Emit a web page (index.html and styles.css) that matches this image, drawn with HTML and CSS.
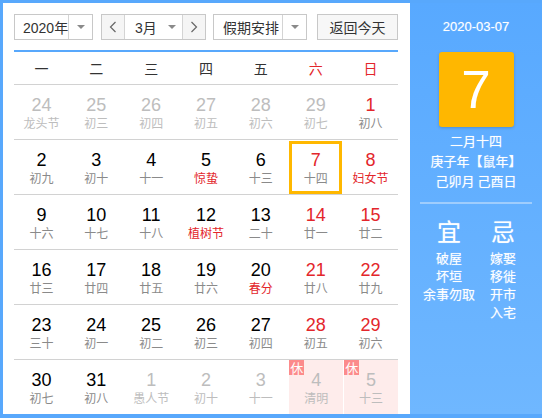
FILE: index.html
```html
<!DOCTYPE html>
<html lang="zh-CN">
<head>
<meta charset="utf-8">
<title>万年历</title>
<link rel="stylesheet" href="styles.css">
</head>
<body>
<div class="cal">
  <div class="main">
    <div class="toolbar">
      <div class="sel sel-year"><span class="sel-text">2020年</span><span class="sel-arrow"><i class="tri"></i></span></div>
      <div class="sel sel-month">
        <span class="nav"><svg width="8" height="12" viewBox="0 0 8 12"><polyline points="6.5,1 1.5,6 6.5,11" fill="none" stroke="#666" stroke-width="1.2"/></svg></span>
        <span class="month-mid"><span class="month-text">3月</span><i class="tri"></i></span>
        <span class="nav nav-r"><svg width="8" height="12" viewBox="0 0 8 12"><polyline points="1.5,1 6.5,6 1.5,11" fill="none" stroke="#666" stroke-width="1.2"/></svg></span>
      </div>
      <div class="sel sel-holiday"><span class="sel-text">假期安排</span><span class="sel-arrow"><i class="tri"></i></span></div>
      <div class="btn-today">返回今天</div>
    </div>
    <div class="rule"></div>
    <div class="week">
      <span>一</span><span>二</span><span>三</span><span>四</span><span>五</span><span class="red">六</span><span class="red">日</span>
    </div>
    <div class="days">
      <div class="row">
        <div class="cell other"><b>24</b><em>龙头节</em></div>
        <div class="cell other"><b>25</b><em>初三</em></div>
        <div class="cell other"><b>26</b><em>初四</em></div>
        <div class="cell other"><b>27</b><em>初五</em></div>
        <div class="cell other"><b>28</b><em>初六</em></div>
        <div class="cell other"><b>29</b><em>初七</em></div>
        <div class="cell wkd"><b>1</b><em>初八</em></div>
      </div>
      <div class="row">
        <div class="cell"><b>2</b><em>初九</em></div>
        <div class="cell"><b>3</b><em>初十</em></div>
        <div class="cell"><b>4</b><em>十一</em></div>
        <div class="cell"><b>5</b><em class="fest">惊蛰</em></div>
        <div class="cell"><b>6</b><em>十三</em></div>
        <div class="cell wkd today"><b>7</b><em>十四</em></div>
        <div class="cell wkd"><b>8</b><em class="fest">妇女节</em></div>
      </div>
      <div class="row">
        <div class="cell"><b>9</b><em>十六</em></div>
        <div class="cell"><b>10</b><em>十七</em></div>
        <div class="cell"><b>11</b><em>十八</em></div>
        <div class="cell"><b>12</b><em class="fest">植树节</em></div>
        <div class="cell"><b>13</b><em>二十</em></div>
        <div class="cell wkd"><b>14</b><em>廿一</em></div>
        <div class="cell wkd"><b>15</b><em>廿二</em></div>
      </div>
      <div class="row">
        <div class="cell"><b>16</b><em>廿三</em></div>
        <div class="cell"><b>17</b><em>廿四</em></div>
        <div class="cell"><b>18</b><em>廿五</em></div>
        <div class="cell"><b>19</b><em>廿六</em></div>
        <div class="cell"><b>20</b><em class="fest">春分</em></div>
        <div class="cell wkd"><b>21</b><em>廿八</em></div>
        <div class="cell wkd"><b>22</b><em>廿九</em></div>
      </div>
      <div class="row">
        <div class="cell"><b>23</b><em>三十</em></div>
        <div class="cell"><b>24</b><em>初一</em></div>
        <div class="cell"><b>25</b><em>初二</em></div>
        <div class="cell"><b>26</b><em>初三</em></div>
        <div class="cell"><b>27</b><em>初四</em></div>
        <div class="cell wkd"><b>28</b><em>初五</em></div>
        <div class="cell wkd"><b>29</b><em>初六</em></div>
      </div>
      <div class="row last">
        <div class="cell"><b>30</b><em>初七</em></div>
        <div class="cell"><b>31</b><em>初八</em></div>
        <div class="cell other"><b>1</b><em>愚人节</em></div>
        <div class="cell other"><b>2</b><em>初十</em></div>
        <div class="cell other"><b>3</b><em>十一</em></div>
        <div class="cell other rest"><span class="badge">休</span><b>4</b><em>清明</em></div>
        <div class="cell other rest rest-r"><span class="badge">休</span><b>5</b><em>十三</em></div>
      </div>
    </div>
  </div>
  <div class="side">
    <div class="side-date">2020-03-07</div>
    <div class="big-day">7</div>
    <div class="lunar">
      <div>二月十四</div>
      <div>庚子年【鼠年】</div>
      <div>己卯月 己酉日</div>
    </div>
    <div class="side-rule"></div>
    <div class="yiji">
      <div class="col">
        <div class="yj-title">宜</div>
        <div>破屋</div>
        <div>坏垣</div>
        <div>余事勿取</div>
      </div>
      <div class="col">
        <div class="yj-title">忌</div>
        <div>嫁娶</div>
        <div>移徙</div>
        <div>开市</div>
        <div>入宅</div>
      </div>
    </div>
  </div>
</div>
</body>
</html>
```

FILE: styles.css
```css
body {
  margin: 0;
  font-family: "Liberation Sans", "Noto Sans CJK SC", sans-serif;
  background: #fff;
}

.cal {
  width: 542px;
  height: 418px;
  box-sizing: border-box;
  border: 3px solid #58a8fc;
  border-right: 0;
  border-bottom-width: 4px;
  display: flex;
}

.main {
  width: 407px;
  box-sizing: border-box;
  padding: 11px 12px 0 11px;
}

/* toolbar */
.toolbar {
  display: flex;
  height: 26px;
  font-size: 14px;
  color: #333;
  white-space: nowrap;
}

.sel {
  display: flex;
  box-sizing: border-box;
  height: 26px;
  border: 1px solid #c8c8c8;
  background: #fff;
}

.sel-text {
  flex: 1;
  min-width: 0;
  display: flex;
  align-items: center;
  padding-left: 9px;
  white-space: nowrap;
}

.sel-arrow {
  width: 23px;
  flex: none;
  border-left: 1px solid #d4d4d4;
  display: flex;
  align-items: center;
  justify-content: center;
}

.tri {
  display: block;
  width: 0;
  height: 0;
  border-left: 4px solid transparent;
  border-right: 4px solid transparent;
  border-top: 4px solid #8a8a8a;
}

.sel-year { width: 79px; }

.sel-year .sel-text { padding-left: 8px; }

.sel-month {
  width: 105px;
  margin-left: 8px;
}

.nav {
  width: 22px;
  flex: none;
  background: #f5f5f5;
  display: flex;
  align-items: center;
  justify-content: center;
  border-right: 1px solid #d4d4d4;
}

.nav-r {
  border-right: 0;
  border-left: 1px solid #d4d4d4;
}

.month-mid {
  flex: 1;
  display: flex;
  align-items: center;
  padding-left: 10px;
  padding-right: 6px;
}

.month-text { flex: 1; }

.sel-holiday {
  width: 94px;
  margin-left: 7px;
}

.btn-today {
  width: 81px;
  margin-left: 10px;
  box-sizing: border-box;
  border: 1px solid #c8c8c8;
  background: #f7f7f7;
  display: flex;
  align-items: center;
  justify-content: center;
}

.rule {
  margin-top: 10px;
  height: 2px;
  background: #58a8fc;
}

/* week header */
.week {
  display: grid;
  grid-template-columns: repeat(7, 1fr);
  height: 32px;
  border-bottom: 1px solid #d2d2d2;
  align-items: center;
  text-align: center;
  font-size: 14px;
  color: #333;
  font-family: "Noto Sans CJK SC", sans-serif;
}

.red { color: #e3262b; }

/* days */
.row {
  display: grid;
  grid-template-columns: repeat(7, 1fr);
  height: 54px;
  border-bottom: 1px solid #d2d2d2;
}

.row.last { border-bottom: 0; }

.cell {
  position: relative;
  display: flex;
  flex-direction: column;
  align-items: center;
  justify-content: center;
  padding-top: 2px;
  box-sizing: border-box;
}

.cell b {
  font-weight: normal;
  font-size: 18px;
  line-height: 20px;
  color: #000;
}

.cell em {
  font-style: normal;
  font-size: 12px;
  line-height: 16px;
  color: #8a8a8a;
  font-family: "Noto Sans CJK SC", sans-serif;
}

.cell.wkd b { color: #e3262b; }

.cell em.fest { color: #e3262b; }

.cell.other b { color: #bdbdbd; }
.cell.other em { color: #bdbdbd; }

.cell.today {
  border: 3px solid #ffb800;
  margin: 1px 1px 0 1px;
  padding-top: 0;
}

.cell.rest {
  background: #feeceb;
  margin-left: 1px;
}

.badge {
  position: absolute;
  top: 0;
  left: 0;
  width: 15px;
  height: 15px;
  background: #fc8b8b;
  color: #fff;
  font-size: 13px;
  line-height: 15px;
  text-align: center;
  font-family: "Noto Sans CJK SC", sans-serif;
}

/* side panel */
.side {
  width: 132px;
  background: linear-gradient(#58a9ff, #6fb7ff);
  color: #fff;
  text-align: center;
  padding-top: 14px;
  box-sizing: border-box;
  font-family: "Noto Sans CJK SC", sans-serif;
  text-shadow: 0 0 1px rgba(255, 255, 255, 0.5);
}

.side-date {
  font-family: "Liberation Sans", sans-serif;
  font-size: 13px;
  line-height: 20px;
}

.big-day {
  width: 75px;
  height: 75px;
  margin: 15px auto 0;
  background: #ffb700;
  border-radius: 3px;
  box-shadow: 0 1px 3px rgba(0, 0, 0, 0.18);
  font-family: "Liberation Sans", sans-serif;
  font-size: 53px;
  line-height: 75px;
  color: #fff;
  text-shadow: none;
}

.lunar {
  margin-top: 4px;
  font-size: 13px;
  line-height: 20px;
}

.side-rule {
  margin: 11px 10px 0;
  height: 2px;
  background: #9fcdfd;
}

.yiji {
  display: grid;
  grid-template-columns: 54px 54px;
  justify-content: center;
  margin-top: 14px;
  font-size: 13px;
  line-height: 18px;
}

.yj-title {
  font-size: 24px;
  line-height: 26px;
  margin-bottom: 5px;
}
```
